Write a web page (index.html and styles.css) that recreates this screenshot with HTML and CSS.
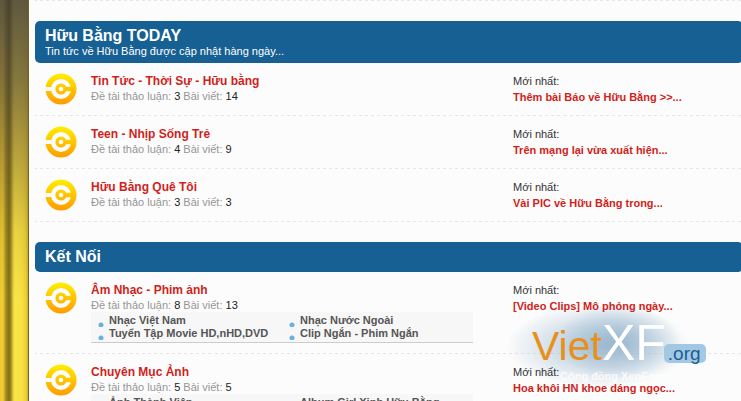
FILE: index.html
```html
<!DOCTYPE html>
<html lang="vi">
<head>
<meta charset="utf-8">
<title>Hữu Bằng</title>
<link rel="stylesheet" href="styles.css">
</head>
<body>
<svg class="defs" aria-hidden="true">
  <linearGradient id="gold" x1="0" y1="0" x2="0" y2="32" gradientUnits="userSpaceOnUse"><stop offset="0" stop-color="#fff000"/><stop offset="1" stop-color="#ff9a00"/></linearGradient>
  <mask id="cut" maskUnits="userSpaceOnUse" x="0" y="0" width="32" height="32">
    <rect width="32" height="32" fill="#fff"/>
    <circle cx="16" cy="16" r="10"/>
    <path d="M0 14H9V18H0Z"/>
    <circle cx="16" cy="16" r="5.6" fill="#fff"/>
    <path d="M19 13.8H28V18.2H19Z" fill="#fff"/>
    <circle cx="16" cy="16" r="2.3"/>
  </mask>
  <symbol id="node" viewBox="0 0 32 32">
    <circle cx="16" cy="16" r="15.5" fill="url(#gold)" mask="url(#cut)"/>
  </symbol>
</svg>
<div class="page">
  <div class="curtain"></div>
  <main class="content">
    <div class="rule"></div>
    <section class="category">
      <header class="strip">
        <h2>Hữu Bằng TODAY</h2>
        <p>Tin tức về Hữu Bằng được cập nhật hàng ngày...</p>
      </header>
      <ol class="nodes">
        <li class="node">
          <svg class="icon"><use href="#node"/></svg>
          <div class="info"><h3><a href="#">Tin Tức - Thời Sự - Hữu bằng</a></h3><p class="stats">Đề tài thảo luận: <b>3</b> Bài viết: <b>14</b></p></div>
          <div class="last"><p>Mới nhất:</p><a href="#">Thêm bài Báo về Hữu Bằng &gt;&gt;...</a></div>
        </li>
        <li class="node">
          <svg class="icon"><use href="#node"/></svg>
          <div class="info"><h3><a href="#">Teen - Nhịp Sống Trẻ</a></h3><p class="stats">Đề tài thảo luận: <b>4</b> Bài viết: <b>9</b></p></div>
          <div class="last"><p>Mới nhất:</p><a href="#">Trên mạng lại vừa xuất hiện...</a></div>
        </li>
        <li class="node">
          <svg class="icon"><use href="#node"/></svg>
          <div class="info"><h3><a href="#">Hữu Bằng Quê Tôi</a></h3><p class="stats">Đề tài thảo luận: <b>3</b> Bài viết: <b>3</b></p></div>
          <div class="last"><p>Mới nhất:</p><a href="#">Vài PIC về Hữu Bằng trong...</a></div>
        </li>
      </ol>
    </section>
    <section class="category">
      <header class="strip">
        <h2>Kết Nối</h2>
      </header>
      <ol class="nodes">
        <li class="node">
          <svg class="icon"><use href="#node"/></svg>
          <div class="info"><h3><a href="#">Âm Nhạc - Phim ảnh</a></h3><p class="stats">Đề tài thảo luận: <b>8</b> Bài viết: <b>13</b></p>
            <ul class="subs"><li><a href="#">Nhạc Việt Nam</a></li><li><a href="#">Nhạc Nước Ngoài</a></li><li><a href="#">Tuyển Tập Movie HD,nHD,DVD</a></li><li><a href="#">Clip Ngắn - Phim Ngắn</a></li></ul>
          </div>
          <div class="last"><p>Mới nhất:</p><a href="#">[Video Clips] Mô phỏng ngày...</a></div>
        </li>
        <li class="node">
          <svg class="icon"><use href="#node"/></svg>
          <div class="info"><h3><a href="#">Chuyên Mục Ảnh</a></h3><p class="stats">Đề tài thảo luận: <b>5</b> Bài viết: <b>5</b></p>
            <ul class="subs"><li><a href="#">Ảnh Thành Viên</a></li><li><a href="#">Album Girl Xinh Hữu Bằng</a></li></ul>
          </div>
          <div class="last"><p>Mới nhất:</p><a href="#">Hoa khôi HN khoe dáng ngọc...</a></div>
        </li>
      </ol>
    </section>
  </main>
  <div class="watermark">
    <div class="logo"><span class="viet">Viet</span><span class="xf">XF</span><span class="org">.org</span></div>
    <small>Cộng đồng XenForo</small>
  </div>
</div>
</body>
</html>
```
FILE: styles.css
```css
* { box-sizing: border-box; margin: 0; padding: 0; }
body { font-family: "Liberation Sans", Arial, sans-serif; font-size: 11px; background: #fcfcfc; color: #333; overflow: hidden; }
a { color: inherit; text-decoration: none; }
ol, ul { list-style: none; }
.defs { position: absolute; width: 0; height: 0; }
.page { position: relative; display: flex; height: 100vh; overflow: hidden; }
.curtain {
  width: 29px; flex: none; border-right: 1px solid #76651f;
  background:
    linear-gradient(to right, transparent 3px, rgba(40,34,16,.3) 9px, transparent 13px),
    linear-gradient(to bottom, rgba(82,76,62,.92), rgba(94,84,58,.75) 20%, rgba(110,90,50,.45) 40%, rgba(110,85,30,.12) 58%, transparent 75%),
    linear-gradient(to right, #f0c830 0, #f2ce32 3px, #b8a024 6px, #a8921e 9px, #b8a024 11px, #e6cc34 13px, #fae64a 15px, #f8e040 22px, #ecd038 26px, #c8b02a 28px);
}
.content { flex: 1; min-width: 0; margin: 0 -2px 0 6px; }
.rule, .node { border-bottom: 1px solid transparent; border-image: repeating-linear-gradient(to right, #e6e6e6 0 3px, transparent 3px 6px) 1; }
.category { margin-top: 20px; }
.strip { background: #176093; color: #fff; border-radius: 5px; padding: 5px 10px 6px; }
.strip h2 { font-size: 16px; line-height: 19px; }
.strip p { line-height: 12px; }
.node { display: flex; min-height: 53px; padding: 10px 0; }
.icon { width: 32px; height: 32px; margin: 0 14px 0 10px; flex: none; }
.info { flex: 1; min-width: 0; }
.info h3 { font-size: 12px; line-height: 16px; color: #d01f20; }
.stats { color: #969696; line-height: 14px; }
.stats b { font-weight: normal; color: #222; }
.subs { display: grid; grid-template-columns: 1fr 1fr; margin-right: 40px; padding: 2px 0; background: #f7f7f7; border-bottom: 1px solid #ccc; color: #555; font-weight: bold; line-height: 13px; white-space: nowrap; }
.subs li { padding-left: 18px; background: radial-gradient(circle at 10px 11px, #68b0e0 2px, transparent 3px); }
.last { position: relative; z-index: 1; width: 230px; flex: none; line-height: 16px; }
.last a { color: #d01f20; font-weight: bold; }
.watermark {
  position: absolute; left: 504px; top: 306px; width: 206px; height: 84px; padding: 14px 0 0 28px; white-space: nowrap;
  background:
    radial-gradient(ellipse 62px 38px at 114px 36px, rgba(120,160,190,.55), rgba(140,175,200,.4) 45%, transparent),
    radial-gradient(ellipse 92px 42px at 94px 40px, rgba(140,175,200,.65), rgba(150,180,205,.4) 50%, transparent);
}
.logo { display: flex; align-items: baseline; line-height: 46px; }
.viet { font-size: 41px; color: #e8901c; }
.xf { font-size: 50px; color: #fff; }
.org { margin-left: -2px; padding: 0 5px 0 4px; font-size: 19px; line-height: 19px; color: #176093; background: #a3c8e4; border-radius: 5px; }
.watermark small { display: block; padding-left: 28px; font-size: 11px; font-weight: bold; line-height: 14px; color: rgba(255,255,255,.8); }
```
